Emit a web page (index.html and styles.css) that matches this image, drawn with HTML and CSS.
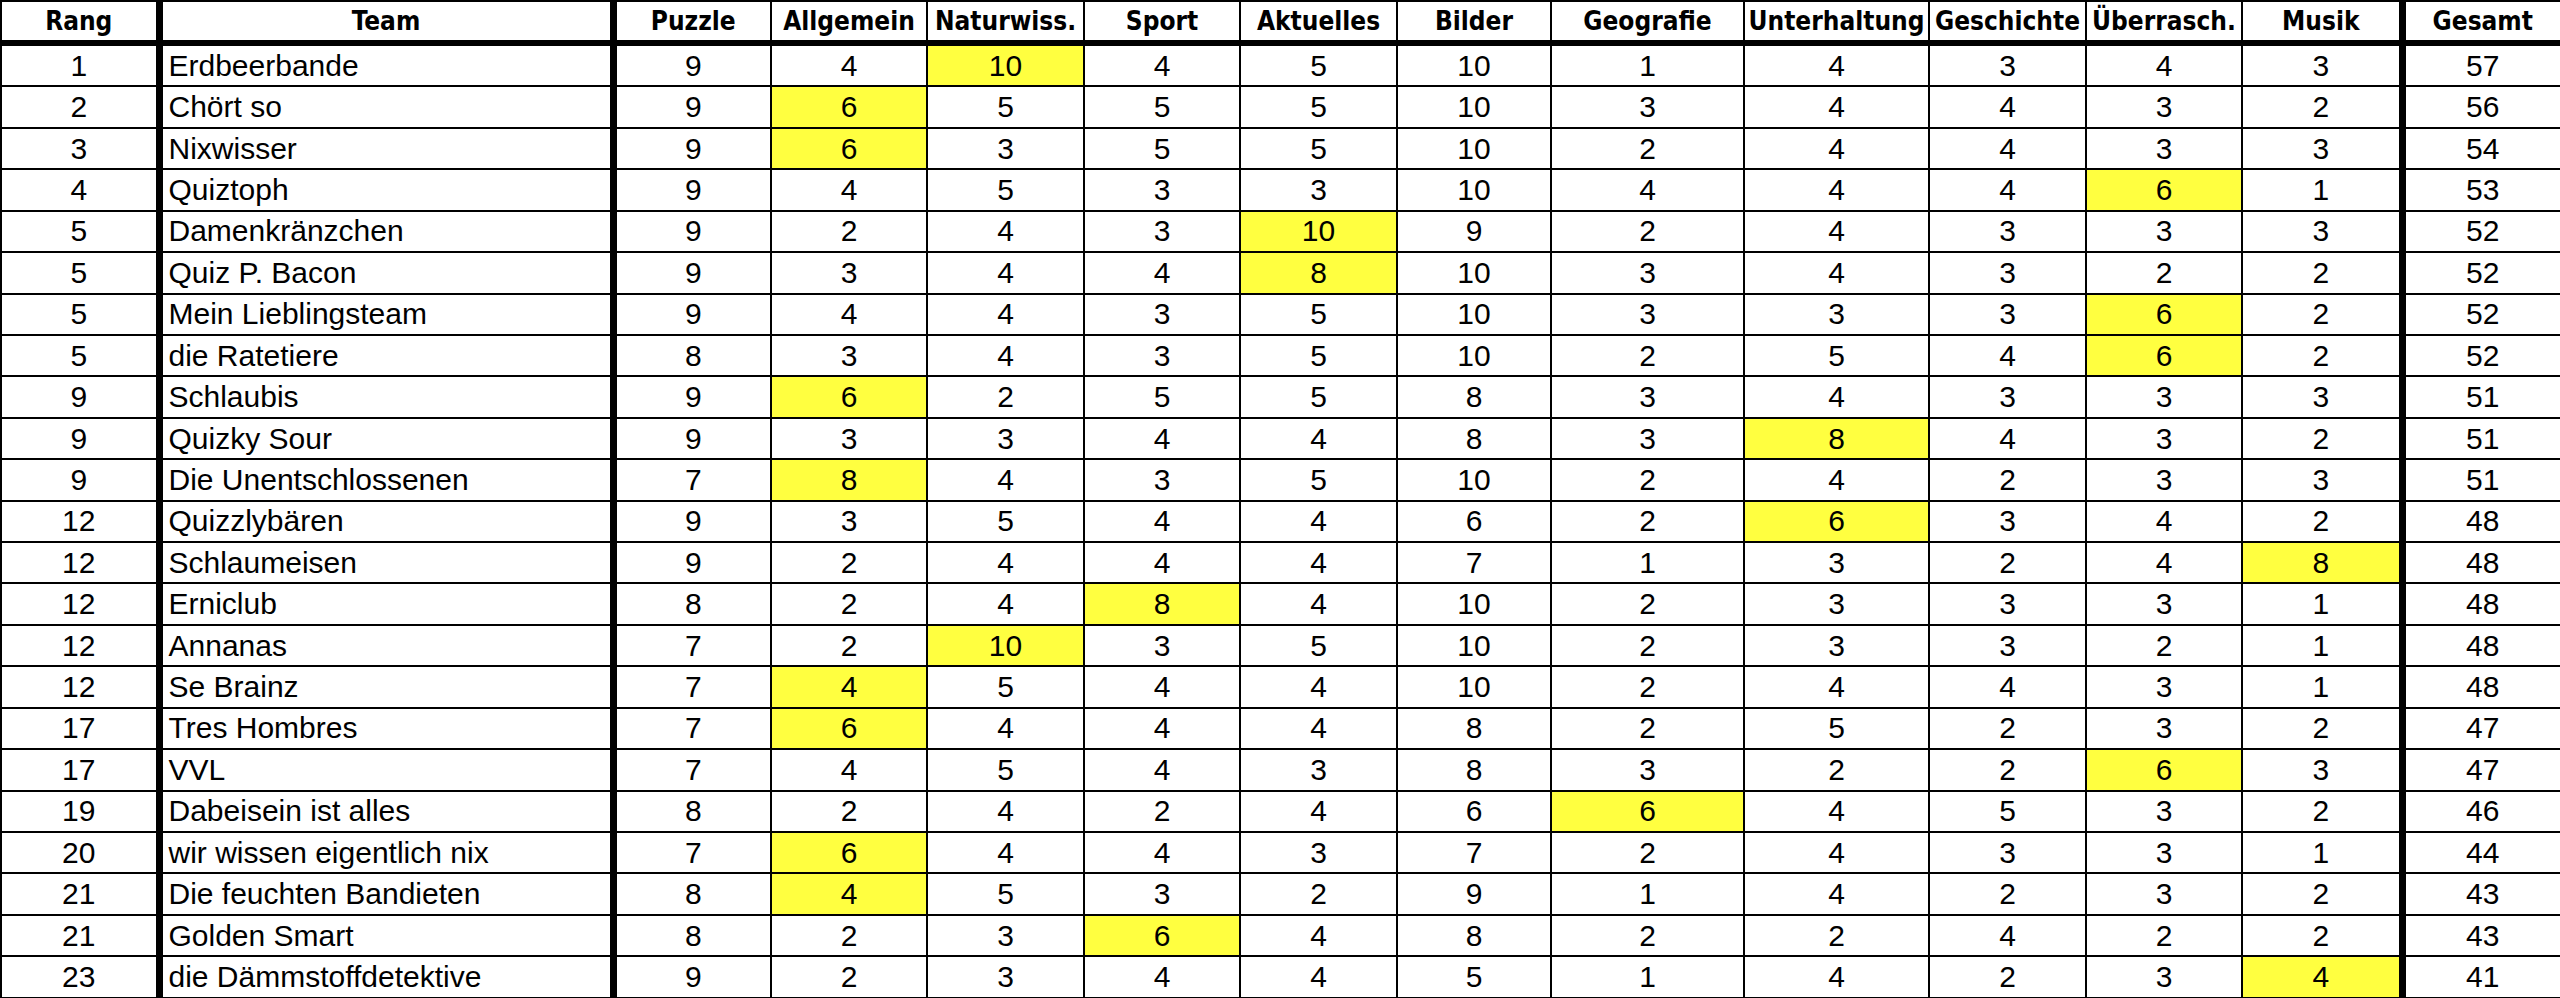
FILE: index.html
```html
<!DOCTYPE html>
<html lang="de">
<head>
<meta charset="utf-8">
<title>Quiz Ergebnisse</title>
<link rel="stylesheet" href="styles.css">
</head>
<body>
<table class="scores">
<colgroup>
<col class="c-rang"><col class="c-team"><col class="c-puz"><col class="c-allg"><col class="c-nat"><col class="c-spo"><col class="c-akt"><col class="c-bil"><col class="c-geo"><col class="c-unt"><col class="c-ges"><col class="c-ueb"><col class="c-mus"><col class="c-tot">
</colgroup>
<thead>
<tr><th class="sep">Rang</th><th class="sep">Team</th><th>Puzzle</th><th>Allgemein</th><th>Naturwiss.</th><th>Sport</th><th>Aktuelles</th><th>Bilder</th><th>Geografie</th><th>Unterhaltung</th><th>Geschichte</th><th>Überrasch.</th><th class="sep">Musik</th><th>Gesamt</th></tr>
</thead>
<tbody>
<tr><td class="sep">1</td><td class="sep team">Erdbeerbande</td><td>9</td><td>4</td><td class="hi">10</td><td>4</td><td>5</td><td>10</td><td>1</td><td>4</td><td>3</td><td>4</td><td class="sep">3</td><td>57</td></tr>
<tr><td class="sep">2</td><td class="sep team">Chört so</td><td>9</td><td class="hi">6</td><td>5</td><td>5</td><td>5</td><td>10</td><td>3</td><td>4</td><td>4</td><td>3</td><td class="sep">2</td><td>56</td></tr>
<tr><td class="sep">3</td><td class="sep team">Nixwisser</td><td>9</td><td class="hi">6</td><td>3</td><td>5</td><td>5</td><td>10</td><td>2</td><td>4</td><td>4</td><td>3</td><td class="sep">3</td><td>54</td></tr>
<tr><td class="sep">4</td><td class="sep team">Quiztoph</td><td>9</td><td>4</td><td>5</td><td>3</td><td>3</td><td>10</td><td>4</td><td>4</td><td>4</td><td class="hi">6</td><td class="sep">1</td><td>53</td></tr>
<tr><td class="sep">5</td><td class="sep team">Damenkränzchen</td><td>9</td><td>2</td><td>4</td><td>3</td><td class="hi">10</td><td>9</td><td>2</td><td>4</td><td>3</td><td>3</td><td class="sep">3</td><td>52</td></tr>
<tr><td class="sep">5</td><td class="sep team">Quiz P. Bacon</td><td>9</td><td>3</td><td>4</td><td>4</td><td class="hi">8</td><td>10</td><td>3</td><td>4</td><td>3</td><td>2</td><td class="sep">2</td><td>52</td></tr>
<tr><td class="sep">5</td><td class="sep team">Mein Lieblingsteam</td><td>9</td><td>4</td><td>4</td><td>3</td><td>5</td><td>10</td><td>3</td><td>3</td><td>3</td><td class="hi">6</td><td class="sep">2</td><td>52</td></tr>
<tr><td class="sep">5</td><td class="sep team">die Ratetiere</td><td>8</td><td>3</td><td>4</td><td>3</td><td>5</td><td>10</td><td>2</td><td>5</td><td>4</td><td class="hi">6</td><td class="sep">2</td><td>52</td></tr>
<tr><td class="sep">9</td><td class="sep team">Schlaubis</td><td>9</td><td class="hi">6</td><td>2</td><td>5</td><td>5</td><td>8</td><td>3</td><td>4</td><td>3</td><td>3</td><td class="sep">3</td><td>51</td></tr>
<tr><td class="sep">9</td><td class="sep team">Quizky Sour</td><td>9</td><td>3</td><td>3</td><td>4</td><td>4</td><td>8</td><td>3</td><td class="hi">8</td><td>4</td><td>3</td><td class="sep">2</td><td>51</td></tr>
<tr><td class="sep">9</td><td class="sep team">Die Unentschlossenen</td><td>7</td><td class="hi">8</td><td>4</td><td>3</td><td>5</td><td>10</td><td>2</td><td>4</td><td>2</td><td>3</td><td class="sep">3</td><td>51</td></tr>
<tr><td class="sep">12</td><td class="sep team">Quizzlybären</td><td>9</td><td>3</td><td>5</td><td>4</td><td>4</td><td>6</td><td>2</td><td class="hi">6</td><td>3</td><td>4</td><td class="sep">2</td><td>48</td></tr>
<tr><td class="sep">12</td><td class="sep team">Schlaumeisen</td><td>9</td><td>2</td><td>4</td><td>4</td><td>4</td><td>7</td><td>1</td><td>3</td><td>2</td><td>4</td><td class="sep hi">8</td><td>48</td></tr>
<tr><td class="sep">12</td><td class="sep team">Erniclub</td><td>8</td><td>2</td><td>4</td><td class="hi">8</td><td>4</td><td>10</td><td>2</td><td>3</td><td>3</td><td>3</td><td class="sep">1</td><td>48</td></tr>
<tr><td class="sep">12</td><td class="sep team">Annanas</td><td>7</td><td>2</td><td class="hi">10</td><td>3</td><td>5</td><td>10</td><td>2</td><td>3</td><td>3</td><td>2</td><td class="sep">1</td><td>48</td></tr>
<tr><td class="sep">12</td><td class="sep team">Se Brainz</td><td>7</td><td class="hi">4</td><td>5</td><td>4</td><td>4</td><td>10</td><td>2</td><td>4</td><td>4</td><td>3</td><td class="sep">1</td><td>48</td></tr>
<tr><td class="sep">17</td><td class="sep team">Tres Hombres</td><td>7</td><td class="hi">6</td><td>4</td><td>4</td><td>4</td><td>8</td><td>2</td><td>5</td><td>2</td><td>3</td><td class="sep">2</td><td>47</td></tr>
<tr><td class="sep">17</td><td class="sep team">VVL</td><td>7</td><td>4</td><td>5</td><td>4</td><td>3</td><td>8</td><td>3</td><td>2</td><td>2</td><td class="hi">6</td><td class="sep">3</td><td>47</td></tr>
<tr><td class="sep">19</td><td class="sep team">Dabeisein ist alles</td><td>8</td><td>2</td><td>4</td><td>2</td><td>4</td><td>6</td><td class="hi">6</td><td>4</td><td>5</td><td>3</td><td class="sep">2</td><td>46</td></tr>
<tr><td class="sep">20</td><td class="sep team">wir wissen eigentlich nix</td><td>7</td><td class="hi">6</td><td>4</td><td>4</td><td>3</td><td>7</td><td>2</td><td>4</td><td>3</td><td>3</td><td class="sep">1</td><td>44</td></tr>
<tr><td class="sep">21</td><td class="sep team">Die feuchten Bandieten</td><td>8</td><td class="hi">4</td><td>5</td><td>3</td><td>2</td><td>9</td><td>1</td><td>4</td><td>2</td><td>3</td><td class="sep">2</td><td>43</td></tr>
<tr><td class="sep">21</td><td class="sep team">Golden Smart</td><td>8</td><td>2</td><td>3</td><td class="hi">6</td><td>4</td><td>8</td><td>2</td><td>2</td><td>4</td><td>2</td><td class="sep">2</td><td>43</td></tr>
<tr><td class="sep">23</td><td class="sep team">die Dämmstoffdetektive</td><td>9</td><td>2</td><td>3</td><td>4</td><td>4</td><td>5</td><td>1</td><td>4</td><td>2</td><td>3</td><td class="sep hi">4</td><td>41</td></tr>
</tbody>
</table>
</body>
</html>
```
FILE: styles.css
```css
html, body {
  margin: 0;
  padding: 0;
  background: #ffffff;
}

.scores {
  border-collapse: collapse;
  table-layout: fixed;
  width: 2560px;
  border: 2px solid #000;
  color: #000;
}

.c-rang { width: 158px; }
.c-team { width: 454px; }
.c-puz  { width: 158px; }
.c-allg { width: 156px; }
.c-nat  { width: 157px; }
.c-spo  { width: 156px; }
.c-akt  { width: 157px; }
.c-bil  { width: 154px; }
.c-geo  { width: 193px; }
.c-unt  { width: 185px; }
.c-ges  { width: 157px; }
.c-ueb  { width: 156px; }
.c-mus  { width: 160px; }
.c-tot  { width: 159px; }

.scores th,
.scores td {
  border: 2px solid #000;
  padding: 0;
  text-align: center;
  vertical-align: middle;
  overflow: hidden;
  white-space: nowrap;
}

.scores th {
  height: 38px;
  font-family: "DejaVu Sans Condensed", "DejaVu Sans", sans-serif;
  font-stretch: condensed;
  font-weight: bold;
  font-size: 26px;
  border-bottom: 6px solid #000;
  line-height: 1;
}

.scores td {
  height: 39.43px;
  font-family: "Liberation Sans", Arial, sans-serif;
  font-size: 30px;
  line-height: 1;
}

.scores .sep {
  border-right: 7px solid #000;
}

.scores td.team {
  text-align: left;
  padding-left: 6px;
}

.scores td.hi {
  background: #ffff40;
}
```
